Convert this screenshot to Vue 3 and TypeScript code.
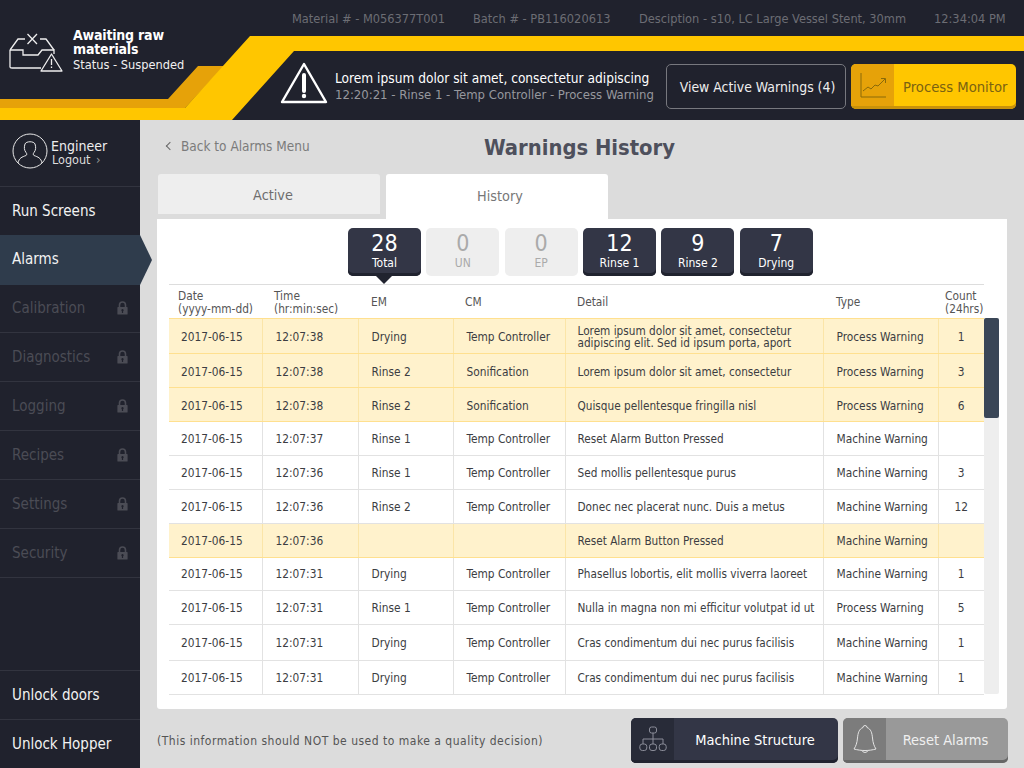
<script setup lang="ts">
interface Row { date: string; time: string; em: string; cm: string; detail: string; type: string; count: string; warn?: boolean; h: number }
const rows: Row[] = [
  { date: '2017-06-15', time: '12:07:38', em: 'Drying', cm: 'Temp Controller', detail: 'Lorem ipsum dolor sit amet, consectetur adipiscing elit. Sed id ipsum porta, aport', type: 'Process Warning', count: '1', warn: true, h: 35 },
  { date: '2017-06-15', time: '12:07:38', em: 'Rinse 2', cm: 'Sonification', detail: 'Lorem ipsum dolor sit amet, consectetur', type: 'Process Warning', count: '3', warn: true, h: 34 },
  { date: '2017-06-15', time: '12:07:38', em: 'Rinse 2', cm: 'Sonification', detail: 'Quisque pellentesque fringilla nisl', type: 'Process Warning', count: '6', warn: true, h: 34 },
  { date: '2017-06-15', time: '12:07:37', em: 'Rinse 1', cm: 'Temp Controller', detail: 'Reset Alarm Button Pressed', type: 'Machine Warning', count: '', h: 34 },
  { date: '2017-06-15', time: '12:07:36', em: 'Rinse 1', cm: 'Temp Controller', detail: 'Sed mollis pellentesque purus', type: 'Machine Warning', count: '3', h: 34 },
  { date: '2017-06-15', time: '12:07:36', em: 'Rinse 2', cm: 'Temp Controller', detail: 'Donec nec placerat nunc. Duis a metus', type: 'Machine Warning', count: '12', h: 34 },
  { date: '2017-06-15', time: '12:07:36', em: '', cm: '', detail: 'Reset Alarm Button Pressed', type: 'Machine Warning', count: '', warn: true, h: 34 },
  { date: '2017-06-15', time: '12:07:31', em: 'Drying', cm: 'Temp Controller', detail: 'Phasellus lobortis, elit mollis viverra laoreet', type: 'Machine Warning', count: '1', h: 33 },
  { date: '2017-06-15', time: '12:07:31', em: 'Rinse 1', cm: 'Temp Controller', detail: 'Nulla in magna non mi efficitur volutpat id ut', type: 'Process Warning', count: '5', h: 34 },
  { date: '2017-06-15', time: '12:07:31', em: 'Drying', cm: 'Temp Controller', detail: 'Cras condimentum dui nec purus facilisis', type: 'Machine Warning', count: '1', h: 36 },
  { date: '2017-06-15', time: '12:07:31', em: 'Drying', cm: 'Temp Controller', detail: 'Cras condimentum dui nec purus facilisis', type: 'Machine Warning', count: '1', h: 34 },
]
const stats = [
  { n: '28', l: 'Total', on: true, sel: true },
  { n: '0', l: 'UN', on: false },
  { n: '0', l: 'EP', on: false },
  { n: '12', l: 'Rinse 1', on: true },
  { n: '9', l: 'Rinse 2', on: true },
  { n: '7', l: 'Drying', on: true },
]
const locked = ['Calibration', 'Diagnostics', 'Logging', 'Recipes', 'Settings', 'Security']
</script>

<template>
  <div class="app">
    <header class="top">
      <svg class="ribbon" width="1024" height="120" viewBox="0 0 1024 120">
        <polygon points="0,99 168,99 198,66 224,66 185,108 0,108" fill="#e6a209" />
        <polygon points="250,36 1024,36 1024,51 294,51 232,120 0,120 0,108 185,108" fill="#ffc600" />
      </svg>
      <div class="meta">
        <span class="m1">Material # - M056377T001</span>
        <span class="m2">Batch # - PB116020613</span>
        <span class="m3">Desciption - s10, LC Large Vessel Stent, 30mm</span>
        <span class="m4">12:34:04 PM</span>
      </div>
      <div class="top-row">
        <div class="status">
          <svg class="status-ico" width="54" height="40" viewBox="0 0 54 40" fill="none" stroke="#eee" stroke-width="1.3">
            <path d="M1 18 L9 7 H16 M31 7 H37 L45 18" />
            <path d="M1 18 H14 V23 H29 L33 18 H45 V22" />
            <path d="M1 18 V35 Q1 36 3 36 H32" />
            <path d="M18.5 2 L28 12 M28 2 L18.5 12" />
            <path d="M42.5 22 L53 39 H32 Z" stroke-linejoin="round" />
            <path d="M42.5 27 V33 M42.5 34.5 V36" />
          </svg>
          <div class="status-text">
            <strong>Awaiting raw<br />materials</strong>
            <span>Status - Suspended</span>
          </div>
        </div>
        <div class="alert">
          <svg class="tri" width="50" height="44" viewBox="0 0 50 44" fill="none">
            <path d="M25 3 L47 41 H3 Z" stroke="#fff" stroke-width="2.4" stroke-linejoin="round" />
            <path d="M25 14 V30" stroke="#fff" stroke-width="4" stroke-linecap="round" />
            <circle cx="25" cy="35" r="2.2" fill="#fff" />
          </svg>
          <div class="alert-text">
            <div class="a1">Lorem ipsum dolor sit amet, consectetur adipiscing</div>
            <div class="a2">12:20:21 - Rinse 1 - Temp Controller - Process Warning</div>
          </div>
        </div>
        <button class="view-btn">View Active Warnings (4)</button>
        <button class="pm-btn">
          <span class="pm-ico">
            <svg width="28" height="26" viewBox="0 0 28 26" fill="none" stroke="#8a6a0a" stroke-width="1">
              <path d="M2 1 V25 H27" />
              <path d="M4 19 L9 15 L12 17 L16 13 L19 14 L26 7 M22 6.5 H26.5 V11" />
            </svg>
          </span>
          <span class="pm-label">Process Monitor</span>
        </button>
      </div>
    </header>

    <div class="body">
      <nav class="side">
        <div class="user">
          <svg width="36" height="36" viewBox="0 0 36 36" fill="none" stroke="#e8e8e8" stroke-width="1">
            <circle cx="18" cy="18" r="17" />
            <path d="M6 30 C7 25 10 24 14 22.5 C15 22 15 20.5 14 19.5 C12 17 12 14 13 11 C14 8 22 8 23 11 C24 14 24 17 22 19.5 C21 20.5 21 22 22 22.5 C26 24 29 25 30 30" />
          </svg>
          <div class="user-text">
            <div class="u1">Engineer</div>
            <div class="u2">Logout <span class="chev">›</span></div>
          </div>
        </div>
        <a class="item run">Run Screens</a>
        <a class="item active">Alarms</a>
        <a v-for="name in locked" :key="name" class="item locked">
          <span>{{ name }}</span>
          <svg width="11" height="14" viewBox="0 0 11 14">
            <path d="M2.5 6 V4 a3 3 0 0 1 6 0 V6" fill="none" stroke="#4b4c55" stroke-width="1.6" />
            <path fill-rule="evenodd" d="M1 6 H10 a.6 .6 0 0 1 .6 .6 V13 a.6 .6 0 0 1 -.6 .6 H1 a.6 .6 0 0 1 -.6 -.6 V6.6 a.6 .6 0 0 1 .6 -.6 Z M5.5 8 a1.2 1.2 0 0 0 -.6 2.2 V12 h1.2 V10.2 A1.2 1.2 0 0 0 5.5 8 Z" fill="#4b4c55" />
          </svg>
        </a>
        <div class="spacer"></div>
        <a class="item unlock">Unlock doors</a>
        <a class="item unlock last">Unlock Hopper</a>
      </nav>

      <main class="main">
        <div class="title-row">
          <a class="back"><span class="back-chev"></span>Back to Alarms Menu</a>
          <h1>Warnings History</h1>
        </div>
        <div class="tabs">
          <div class="tab">Active</div>
          <div class="tab current">History</div>
        </div>
        <section class="card">
          <div class="stats">
            <div v-for="s in stats" :key="s.l" class="stat" :class="{ on: s.on, sel: s.sel }">
              <div class="n">{{ s.n }}</div>
              <div class="l">{{ s.l }}</div>
            </div>
          </div>
          <div class="table-wrap">
            <table>
              <colgroup>
                <col class="c1" /><col class="c2" /><col class="c3" /><col class="c4" /><col class="c5" /><col class="c6" /><col class="c7" />
              </colgroup>
              <thead>
                <tr>
                  <th><span class="two">Date<br />(yyyy-mm-dd)</span></th>
                  <th><span class="two">Time<br />(hr:min:sec)</span></th>
                  <th>EM</th>
                  <th>CM</th>
                  <th>Detail</th>
                  <th>Type</th>
                  <th><span class="two">Count<br />(24hrs)</span></th>
                </tr>
              </thead>
              <tbody>
                <tr v-for="(r, i) in rows" :key="i" :class="{ warn: r.warn }" :style="{ height: r.h + 'px' }">
                  <td>{{ r.date }}</td>
                  <td>{{ r.time }}</td>
                  <td>{{ r.em }}</td>
                  <td>{{ r.cm }}</td>
                  <td class="detail">{{ r.detail }}</td>
                  <td>{{ r.type }}</td>
                  <td class="cnt">{{ r.count }}</td>
                </tr>
              </tbody>
            </table>
            <div class="scroll"><div class="thumb"></div></div>
          </div>
        </section>
        <footer class="foot">
          <p>(This information should NOT be used to make a quality decision)</p>
          <button class="act dark">
            <span class="act-ico">
              <svg width="28" height="26" viewBox="0 0 28 26" fill="none" stroke="#8b8d99" stroke-width="1">
                <rect x="10.5" y="1" width="7" height="6" rx="2" />
                <path d="M14 7 V13 M4 18 V13 H24 V18 M14 13 V18" />
                <rect x="0.8" y="18" width="7" height="6.5" rx="2.5" />
                <rect x="10.5" y="18" width="7" height="6.5" rx="2.5" />
                <rect x="20.2" y="18" width="7" height="6.5" rx="2.5" />
              </svg>
            </span>
            <span class="act-label">Machine Structure</span>
          </button>
          <button class="act grey">
            <span class="act-ico">
              <svg width="24" height="30" viewBox="0 0 24 30" fill="none" stroke="#e4e4e4" stroke-width="1">
                <path d="M12 1.5 a2 2 0 0 1 2 2 C18 5 19 9 19.5 14 C20 19 21 22 23 25 C16 27 8 27 1 25 C3 22 4 19 4.5 14 C5 9 6 5 10 3.5 a2 2 0 0 1 2 -2 Z" />
                <path d="M9 26.5 a3.2 3 0 0 0 6 0" />
              </svg>
            </span>
            <span class="act-label">Reset Alarms</span>
          </button>
        </footer>
      </main>
    </div>
  </div>
</template>

<style>
html, body { margin: 0; background: #dcdcdc; }
</style>

<style scoped>
.app {
  width: 1024px; height: 768px; overflow: hidden; display: flex; flex-direction: column;
  font-family: "DejaVu Sans Condensed", "DejaVu Sans", sans-serif; font-stretch: condensed;
  font-size: 11.8px; color: #3c3d42; background: #dcdcdc;
}
button { font-family: inherit; font-stretch: inherit; border: 0; padding: 0; cursor: pointer; }

.top { position: relative; height: 120px; flex: none; background: #20222d; }
.ribbon { position: absolute; left: 0; top: 0; }
.meta { position: relative; height: 36px; display: flex; align-items: center; padding-left: 292px; color: #6c6d74; font-size: 12.7px; }
.m1 { width: 181px; }
.m2 { width: 166px; }
.m3 { width: 295px; }
.top-row { position: relative; height: 84px; display: flex; }
.status { width: 279px; flex: none; display: flex; padding: 0 0 0 9px; box-sizing: border-box; height: 50px; margin-top: -4px; }
.status-ico { flex: none; }
.status-text { margin-left: 10px; color: #f0f0f0; display: flex; flex-direction: column; margin-top: -4px; }
.status-text strong { font-size: 14px; line-height: 14px; color: #fff; font-stretch: normal; letter-spacing: -0.2px; }
.status-text span { font-size: 12.7px; line-height: 18px; }
.alert { width: 387px; flex: none; display: flex; margin-top: 25px; height: 50px; }
.tri { flex: none; margin-right: 6px; }
.alert-text { margin-top: 8px; white-space: nowrap; }
.a1 { color: #fff; font-size: 13.6px; line-height: 18px; }
.a2 { color: #97989e; font-size: 13px; line-height: 14px; margin-top: 1px; }
.view-btn { width: 180px; height: 45px; margin-top: 28px; box-sizing: border-box; border: 1px solid #77787e; border-radius: 5px; padding-left: 3px; background: #20222d; color: #eee; font-size: 13.9px; flex: none; }
.pm-btn { width: 165px; height: 45px; margin: 28px 0 0 5px; display: flex; flex: none; background: #ffc600; border-radius: 5px; overflow: hidden; box-shadow: inset 0 -3px 0 #c9920a; }
.pm-ico { width: 43px; height: 42px; background: #e6a209; display: flex; align-items: center; justify-content: center; }
.pm-label { flex: 1; line-height: 45px; color: #7a6212; font-size: 14.7px; text-align: left; padding-left: 9px; white-space: nowrap; }

.body { display: flex; flex: 1; min-height: 0; }
.side { width: 140px; flex: none; background: #20222d; display: flex; flex-direction: column; color: #fff; position: relative; z-index: 2; }
.user { height: 67px; flex: none; display: flex; align-items: center; padding: 0 0 4px 12px; box-sizing: border-box; border-bottom: 1px solid #32343f; gap: 3px; }
.user-text { margin-top: 3px; }
.u1 { font-size: 14px; line-height: 14px; color: #eee; }
.u2 { font-size: 12.5px; line-height: 13px; color: #ddd; padding-left: 1px; }
.chev { color: #999; margin-left: 2px; }
.item { height: 49px; flex: none; box-sizing: border-box; display: flex; align-items: center; justify-content: space-between; padding: 0 12px 0 12px; font-size: 15px; border-bottom: 1px solid #32343f; color: #f2f2f2; }
.run { height: 48px; border-bottom: 0; }
.active { position: relative; height: 50px; padding-bottom: 2px; background: #2f3c4c; border-bottom: 0; }
.active::after { content: ""; position: absolute; left: 140px; top: 0; border-left: 12px solid #2f3c4c; border-top: 25px solid transparent; border-bottom: 25px solid transparent; }
.locked { color: #4b4c55; }
.active + .locked { height: 48px; padding-bottom: 2px; }
.spacer { flex: 1; border-bottom: 1px solid #32343f; }
.last { height: 48px; border-bottom: 0; }

.main { flex: 1; min-width: 0; padding: 0 17px; display: flex; flex-direction: column; }
.title-row { position: relative; height: 54px; display: flex; align-items: center; justify-content: center; }
.title-row h1 { margin: 0 5px 0 0; font-size: 21.8px; font-weight: 700; color: #4e505c; font-stretch: normal; }
.back { position: absolute; left: 10px; top: 17px; font-size: 13.5px; line-height: 18px; color: #7b7b7b; display: flex; align-items: center; }
.back-chev { width: 5px; height: 5px; border-left: 1px solid #666; border-bottom: 1px solid #666; transform: rotate(45deg); margin-right: 8px; }
.tabs { height: 45px; display: flex; gap: 6px; padding-left: 1px; flex: none; }
.tab { width: 222px; height: 40px; box-sizing: border-box; padding-left: 8px; background: #eee; border-radius: 3px 3px 0 0; text-align: center; line-height: 42px; font-size: 14.3px; color: #6d6d6d; }
.current { height: 45px; padding-left: 6px; background: #fff; line-height: 44px; color: #777; }
.card { height: 490px; width: 850px; background: #fff; border-radius: 0 0 3px 3px; flex: none; }
.stats { display: flex; gap: 5.35px; padding: 9px 0 0 191px; height: 48px; }
.stat { width: 73px; height: 48px; box-sizing: border-box; border-radius: 5px; background: #eee; color: #aaa; text-align: center; position: relative; }
.on { background: #333646; color: #fff; box-shadow: inset 0 -3px 0 #20232f; }
.n { font-size: 23px; line-height: 26px; padding-top: 2px; }
.l { font-size: 12px; line-height: 14px; }
.sel::after { content: ""; position: absolute; left: 28px; top: 48px; border-top: 8px solid #20232f; border-left: 8px solid transparent; border-right: 8px solid transparent; }
.table-wrap { position: relative; margin: 8px 0 0 12px; width: 830px; }
table { border-collapse: collapse; table-layout: fixed; width: 815px; }
.c1 { width: 93px; } .c2 { width: 96px; } .c3 { width: 95px; } .c4 { width: 112px; }
.c5 { width: 258px; } .c6 { width: 115px; } .c7 { width: 46px; }
th { height: 34px; padding: 2px 0 0 13px; font-weight: 400; text-align: left; font-size: 11.8px; color: #555; border-top: 1px solid #ddd; vertical-align: middle; line-height: 13px; box-sizing: border-box; }
th:nth-child(1) { padding-left: 9px; }
th:nth-child(2), th:nth-child(4), th:nth-child(5) { padding-left: 12px; }
th:nth-child(7) { padding-left: 7px; }
.two { display: block; }
td { padding: 0 0 0 13px; font-size: 11.8px; color: #3c3d42; line-height: 12px; border-top: 1px solid #e2e2e2; border-bottom: 1px solid #e2e2e2; border-left: 1px solid #e2e2e2; box-sizing: border-box; }
td:first-child { border-left: 0; padding-left: 12px; }
tr:nth-child(-n+3) td { padding-top: 2px; }
.detail { padding-left: 12px; padding-right: 0; font-size: 11.7px; }
.cnt { text-align: center; padding-left: 0; }
.warn td { background: #fff2cc; border-top-color: #ffe08f; border-bottom-color: #ffe08f; border-left-color: #fbe5a8; }
.warn + .warn td { border-top-color: #fbe5a8; }
.scroll { position: absolute; left: 815px; top: 34px; width: 15px; height: 376px; background: #eee; border-radius: 2px; }
.thumb { height: 100px; background: #3a4657; border-radius: 2px; }
.foot { flex: 1; display: flex; align-items: flex-start; padding-top: 9px; }
.foot p { margin: 0; width: 474px; flex: none; line-height: 46px; font-size: 12px; letter-spacing: 0.5px; color: #555; }
.act { height: 45px; display: flex; border-radius: 5px; overflow: hidden; flex: none; margin-right: 5px; color: #fff; font-size: 14.5px; }
.act-ico { width: 43px; height: 100%; display: flex; align-items: center; justify-content: center; padding-bottom: 3px; box-sizing: border-box; }
.act-label { flex: 1; text-align: center; line-height: 45px; white-space: nowrap; }
.dark .act-label { padding-right: 2px; }
.grey .act-label { padding-right: 3px; }
.dark { width: 207px; background: #333646; box-shadow: inset 0 -3px 0 #20232f; }
.dark .act-ico { background: #282b38; box-shadow: inset 0 -3px 0 #20232f; }
.grey { width: 165px; background: #999; box-shadow: inset 0 -3px 0 #666; color: #f0f0f0; margin-right: 0; }
.grey .act-ico { background: #7c7c7c; box-shadow: inset 0 -3px 0 #666; }
</style>
